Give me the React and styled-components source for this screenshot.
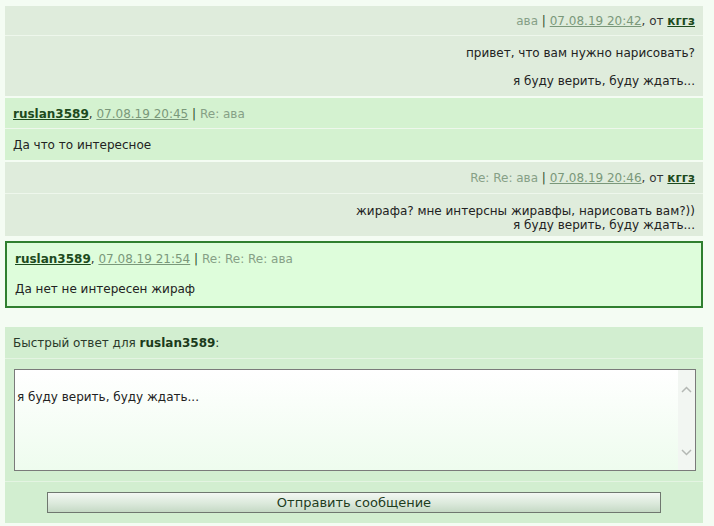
import React from "react";
import styled, { createGlobalStyle, css } from "styled-components";

const Global = createGlobalStyle`
  html, body { margin: 0; padding: 0; }
  body {
    background: #f4fcf3;
    font-family: "DejaVu Sans", Verdana, sans-serif;
    font-size: 12px;
    color: #222;
  }
`;

const Page = styled.div`
  width: 698px;
  padding: 6px 0 0 5px;
  display: flex;
  flex-direction: column;
`;

const Thread = styled.div`
  display: flex;
  flex-direction: column;
  gap: 2px;
`;

const palette = {
  theirs: "#dfecdc",
  mine: "#d4f2d0",
};

const Message = styled.div`
  display: flex;
  flex-direction: column;
  gap: 1px;
  background: #eef7ec;
`;

const Header = styled.div`
  height: ${(p) => p.$h || 30}px;
  line-height: ${(p) => p.$h || 30}px;
  padding: 1px 8px 0;
  box-sizing: border-box;
  text-align: ${(p) => (p.$side === "theirs" ? "right" : "left")};
  background: ${(p) => palette[p.$side]};
  white-space: nowrap;
`;

const Body = styled.div`
  background: ${(p) => palette[p.$side]};
  padding: ${(p) => p.$pad || "8px"};
  text-align: ${(p) => (p.$side === "theirs" ? "right" : "left")};
  line-height: ${(p) => p.$lh || 15}px;
`;

const Para = styled.p`
  margin: 0;
  & + & { margin-top: 13px; }
`;

const Author = styled.a`
  color: #1d4a1d;
  font-weight: bold;
  text-decoration: underline;
`;

const DateLink = styled.a`
  color: #7a987a;
  text-decoration: underline;
`;

const Subject = styled.span`
  color: #86a086;
`;

const Pipe = styled.span`
  color: #2c4f2c;
`;

const Plain = styled.span`
  color: #333;
`;

const Current = styled.div`
  margin-top: 5px;
  border: 2px solid #2f7f2f;
  background: #defddb;
  display: flex;
  flex-direction: column;
`;

const CurrentHeader = styled.div`
  height: 32px;
  line-height: 32px;
  padding: 0 8px;
  white-space: nowrap;
`;

const CurrentBody = styled.div`
  padding: 7px 8px 9px;
  line-height: 15px;
`;

const Reply = styled.form`
  margin: 19px 0 0;
  display: flex;
  flex-direction: column;
  gap: 1px;
  background: #e4f4e2;
`;

const ReplyRow = styled.div`
  background: #d2eed0;
  ${(p) =>
    p.$kind === "title" &&
    css`
      height: 30px;
      line-height: 30px;
      padding: 1px 8px 0;
      white-space: nowrap;
      color: #2a3a2a;
    `}
  ${(p) =>
    p.$kind === "field" &&
    css`
      padding: 10px 7px 10px 9px;
    `}
  ${(p) =>
    p.$kind === "actions" &&
    css`
      padding: 10px 0 10px;
      display: flex;
      justify-content: center;
    `}
`;

const Strong = styled.b`
  color: #1b3a1b;
`;

const FieldBox = styled.div`
  height: 100px;
  border: 1px solid #7a7a7a;
  background: linear-gradient(180deg, #ffffff 0%, #eefcee 100%);
  display: flex;
`;

const TextArea = styled.textarea`
  flex: 1;
  border: 0;
  outline: none;
  resize: none;
  background: transparent;
  padding: 20px 2px 0;
  font: inherit;
  font-size: 12px;
  line-height: 15px;
  color: #222;
`;

const Rail = styled.div`
  width: 17px;
  background: #f2f6f2;
  display: flex;
  flex-direction: column;
  justify-content: space-between;
  align-items: center;
  padding: 16px 0 14px;
`;

const Chevron = ({ up }) => (
  <svg width="11" height="7" viewBox="0 0 11 7">
    <path
      d={up ? "M1 6 L5.5 1.5 L10 6" : "M1 1 L5.5 5.5 L10 1"}
      fill="none"
      stroke="#b4b8b4"
      strokeWidth="1.5"
    />
  </svg>
);

const Submit = styled.button`
  width: 614px;
  height: 21px;
  border: 1px solid #6f776f;
  background: linear-gradient(180deg, #f3f7f3 0%, #dbe9db 55%, #c5d9c5 100%);
  font-family: "DejaVu Sans", Verdana, sans-serif;
  font-size: 13px;
  color: #1e3d1e;
  padding: 0;
  cursor: pointer;
`;

export default function App() {
  return (
    <>
      <Global />
      <Page>
        <Thread>
          <Message>
            <Header $side="theirs" $h={29}>
              <Subject>ава</Subject> <Pipe>|</Pipe> <DateLink>07.08.19 20:42</DateLink>
              <Plain>, от </Plain>
              <Author>кггз</Author>
            </Header>
            <Body $side="theirs" $pad="10px 8px 7px">
              <Para>привет, что вам нужно нарисовать?</Para>
              <Para>я буду верить, буду ждать...</Para>
            </Body>
          </Message>

          <Message>
            <Header $side="mine">
              <Author>ruslan3589</Author>
              <Plain>, </Plain>
              <DateLink>07.08.19 20:45</DateLink> <Pipe>|</Pipe> <Subject>Re: ава</Subject>
            </Header>
            <Body $side="mine" $pad="9px 8px 7px">
              Да что то интересное
            </Body>
          </Message>

          <Message>
            <Header $side="theirs" $h={31}>
              <Subject>Re: Re: ава</Subject> <Pipe>|</Pipe>{" "}
              <DateLink>07.08.19 20:46</DateLink>
              <Plain>, от </Plain>
              <Author>кггз</Author>
            </Header>
            <Body $side="theirs" $pad="10px 8px 4px" $lh={14}>
              жирафа? мне интерсны жиравфы, нарисовать вам?))
              <br />
              я буду верить, буду ждать...
            </Body>
          </Message>
        </Thread>

        <Current>
          <CurrentHeader>
            <Author>ruslan3589</Author>
            <Plain>, </Plain>
            <DateLink>07.08.19 21:54</DateLink> <Pipe>|</Pipe>{" "}
            <Subject>Re: Re: Re: ава</Subject>
          </CurrentHeader>
          <CurrentBody>Да нет не интересен жираф</CurrentBody>
        </Current>

        <Reply onSubmit={(e) => e.preventDefault()}>
          <ReplyRow $kind="title">
            Быстрый ответ для <Strong>ruslan3589</Strong>:
          </ReplyRow>
          <ReplyRow $kind="field">
            <FieldBox>
              <TextArea defaultValue="я буду верить, буду ждать..." />
              <Rail>
                <Chevron up />
                <Chevron />
              </Rail>
            </FieldBox>
          </ReplyRow>
          <ReplyRow $kind="actions">
            <Submit type="submit">Отправить сообщение</Submit>
          </ReplyRow>
        </Reply>
      </Page>
    </>
  );
}
